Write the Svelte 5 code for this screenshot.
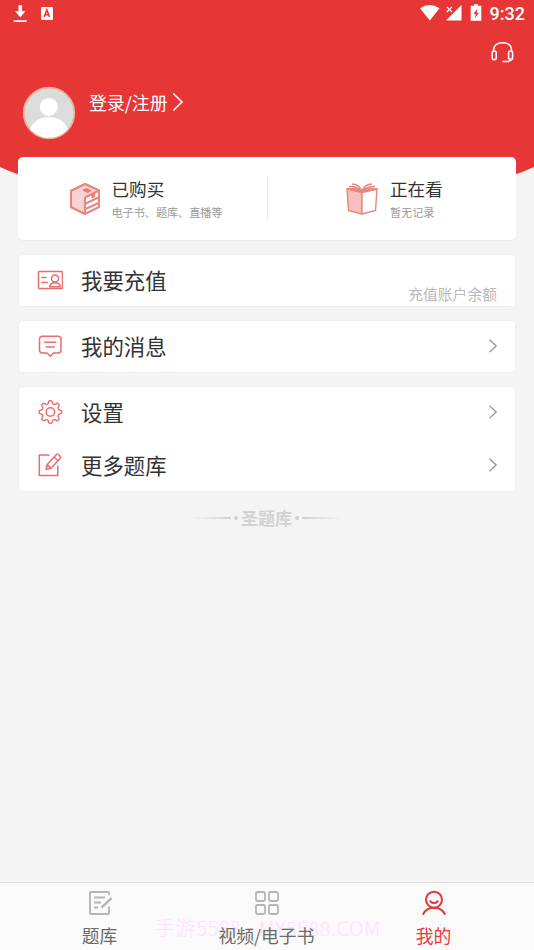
<script>
  const groups = [
    { rows: [{ icon: 'card', label: '我要充值', note: '充值账户余额' }] },
    { rows: [{ icon: 'message', label: '我的消息' }] },
    { rows: [{ icon: 'gear', label: '设置' }, { icon: 'edit', label: '更多题库' }] }
  ];
  const gear = (() => {
    const pts = [];
    const n = 96;
    for (let i = 0; i < n; i++) {
      const a = (i / n) * Math.PI * 2;
      const r = 9.9 + 1.4 * Math.tanh(2.2 * Math.cos(a * 8));
      pts.push(`${(13 + r * Math.sin(a)).toFixed(2)} ${(13 - r * Math.cos(a)).toFixed(2)}`);
    }
    return `M${pts.join('L')}Z`;
  })();
</script>

<div class="screen">
  <header>
    <svg class="backdrop" width="534" height="200" viewBox="0 0 534 200">
      <path d="M0 0H534V167Q515 176 490 182Q267 215 44 182Q19 176 0 167Z" fill="#e63636" />
    </svg>
    <div class="status">
      <svg width="60" height="27" viewBox="0 0 60 27" fill="#fff">
        <path d="M18.5 5h3.6v6.3h3.4L20.3 17.2 15 11.3h3.5zM13.6 20.2h13v1.7h-13z" />
        <rect x="41" y="7" width="12" height="13" rx="1" />
        <path d="M44.2 17 46.8 10 49.6 17M45.2 14.7h3.4" fill="none" stroke="#e63636" stroke-width="1.6" />
      </svg>
      <svg class="signals" width="70" height="27" viewBox="416 0 70 27">
        <path d="M420 8.2Q429.8 1.8 439.5 8.2L429.8 20.5Z" fill="#fff" />
        <path d="M461.5 5V20.5H446Z" fill="#fff" />
        <path d="M445 5H455V9L450 14H445Z" fill="#e63636" />
        <path d="M446.8 6.8l5.2 5.2m0-5.2-5.2 5.2" stroke="#fff" stroke-width="1.1" />
        <path d="M474 4.3h4v1.5h3.3v15h-10.6v-15h3.3z" fill="#fff" />
        <path d="M477.5 8.5l-4 5.5h2.2l-.8 4.3 4-5.6h-2.2z" fill="#e63636" />
      </svg>
      <span class="time">9:32</span>
    </div>
    <svg class="headset" width="24" height="24" viewBox="0 0 24 24" fill="none" stroke="#fff" stroke-width="1.6">
      <path d="M3.5 11.5V10.3C3.5 5.5 7 2.8 12.5 2.8S21.5 5.5 21.5 10.3V11.5M21.3 18.5Q20.5 21.5 17.5 21.5H12.5" />
      <rect x="2.2" y="11" width="4" height="8.6" rx="1.8" />
      <rect x="18.6" y="11" width="4" height="8.6" rx="1.8" />
    </svg>
    <div class="profile">
      <svg width="54" height="54" viewBox="0 0 54 54">
        <defs><clipPath id="face"><circle cx="27" cy="27" r="24.8" /></clipPath></defs>
        <circle cx="27" cy="27" r="25.3" fill="#dcdcdc" stroke="#eeb096" stroke-width="1.8" />
        <g clip-path="url(#face)" fill="#fff">
          <circle cx="26.7" cy="20.9" r="9" />
          <ellipse cx="27" cy="48.5" rx="20" ry="17.5" />
        </g>
      </svg>
      <div class="login">登录/注册
        <svg width="12" height="20" viewBox="0 0 12 20" fill="none" stroke="#fff" stroke-width="1.5"><path d="M1.3 1.5 10 10 1.3 18.5" /></svg>
      </div>
    </div>
  </header>

  <main>
    <section class="card summary">
      <div class="half first">
        <svg width="32" height="34" viewBox="0 0 32 34" fill="none" stroke="#e88680" stroke-width="2" stroke-linejoin="round">
          <path d="M2 9 16 2 30 8.5V25L16 32 2 25Z" fill="#fff" />
          <path d="M2 9 16 2 30 8.5 16 15.5V32L2 25Z" fill="#f9d3d1" />
          <path d="M13 8 17.5 6 23 8.8 18.5 11Z" fill="#e67b76" stroke="none" />
          <path d="M16.5 21.5 29.5 15.5M16.5 27 29.5 21" />
          <path d="M22.5 12.5 26 10.8V15L22.5 16.7Z" fill="#e67b76" stroke="none" />
        </svg>
        <div><h2>已购买</h2><p>电子书、题库、直播等</p></div>
      </div>
      <div class="half second">
        <svg width="32" height="34" viewBox="0 0 32 34" fill="none" stroke="#e88680" stroke-width="1.4" stroke-linejoin="round">
          <path d="M1 7 16 10.5V32L2.5 28.5Z" fill="#f8bfbc" />
          <path d="M31 7 16 10.5V32L29.5 28.5Z" fill="#fff" />
          <path d="M16 10Q12 4 3 4.5M16 9Q13 2 6 2M16 10Q20 4 29 4.5M16 9Q19 2 26 2" />
          <path d="M16 10Q11 5 1 7L16 10Q21 5 31 7Z" fill="#ee9995" />
        </svg>
        <div><h2>正在看</h2><p>暂无记录</p></div>
      </div>
    </section>

    {#each groups as group}
      <section class="card group">
        {#each group.rows as row}
          <div class="row">
            <svg width="26" height="26" viewBox="0 0 26 26" fill="none" stroke="#e66e6b" stroke-width="1.5" stroke-linecap="round" stroke-linejoin="round">
              {#if row.icon === 'card'}
                <rect x="1.5" y="4.5" width="24" height="17" rx="1" />
                <circle cx="18" cy="11.4" r="3.5" />
                <path d="M12.6 19.8C13.1 16.6 15 15.7 18 15.7S22.9 16.6 23.4 19.8ZM5 10.5h4M5 15.5h5.5" />
              {:else if row.icon === 'message'}
                <path d="M5.5 3.3H21Q24 3.3 24 6.3V17Q24 20 21 20H16.5L13.3 23.2 10.1 20H5.5Q2.5 20 2.5 17V6.3Q2.5 3.3 5.5 3.3ZM7.8 9.2h11M9.3 14h8" />
              {:else if row.icon === 'gear'}
                <g transform="translate(.4 0)">
                  <path d={gear} stroke-width="1.4" />
                  <circle cx="13" cy="13" r="4.2" />
                </g>
              {:else}
                <path d="M12 3H2.3V23.5H20.8V14" />
                <path d="M9 17.3 10.2 12.6 19.2 2.8Q20.3 1.6 21.6 2.8L23 4.1Q24.2 5.3 23.1 6.6L14.1 16.2ZM17.2 5 21 8.7M10.2 12.6l3.9 3.6" />
              {/if}
            </svg>
            <span class="label">{row.label}</span>
            {#if row.note}
              <span class="note">{row.note}</span>
            {:else}
              <svg class="arrow" width="10" height="16" viewBox="0 0 10 16" fill="none" stroke="#969696" stroke-width="1.3"><path d="M1.5 1.7 8.2 8 1.5 14.3" /></svg>
            {/if}
          </div>
        {/each}
      </section>
    {/each}

    <div class="brand"><i class="line"></i><i class="dot"></i><span>圣题库</span><i class="dot"></i><i class="line flip"></i></div>
  </main>

  <nav>
    <div class="watermark">手游5588 - MY5588.COM</div>
    <div class="tab">
      <svg width="26" height="26" viewBox="0 0 26 26" fill="none" stroke="#b5b5b5" stroke-width="1.9" stroke-linejoin="round">
        <path d="M22 5V3Q22 2 21 2H4Q3 2 3 3V23Q3 24 4 24H21Q22 24 22 23V16.5M7 7.5h11M7 12.5h7M7 17.5h4" />
        <path d="M14.5 17.7 24.5 8.2" stroke-width="2.4" />
      </svg>
      <span>题库</span>
    </div>
    <div class="tab">
      <svg width="26" height="26" viewBox="0 0 26 26" fill="none" stroke="#b5b5b5" stroke-width="1.8">
        <rect x="2" y="2" width="9" height="9" rx="1.5" /><rect x="15" y="2" width="9" height="9" rx="1.5" />
        <rect x="2" y="15" width="9" height="9" rx="1.5" /><rect x="15" y="15" width="9" height="9" rx="1.5" />
      </svg>
      <span>视频/电子书</span>
    </div>
    <div class="tab active">
      <svg width="26" height="26" viewBox="0 0 26 26" fill="none" stroke="#e0373b" stroke-width="2" stroke-linecap="round">
        <circle cx="13" cy="9.7" r="8" />
        <path d="M9.3 11.2Q13 15 16.7 11.2M2.3 24Q5.2 17.7 13 17.7T23.7 24" />
      </svg>
      <span>我的</span>
    </div>
  </nav>
</div>

<style>
  :global(body) { margin: 0; }
  .screen {
    position: relative; width: 534px; height: 950px; overflow: hidden; box-sizing: border-box;
    display: flex; flex-direction: column; background: #f4f4f4; color: #333;
    font-family: "Noto Sans CJK SC", "Noto Sans", sans-serif;
  }
  header { height: 157px; flex: none; display: flex; flex-direction: column; }
  header > :not(.backdrop), main { position: relative; }
  .backdrop { position: absolute; top: 0; left: 0; }
  svg { display: block; flex: none; }
  .status { display: flex; height: 27px; color: #fff; }
  .signals { margin-left: auto; }
  .time { width: 48px; padding-left: 3.5px; box-sizing: border-box; font: 500 18px/28px Roboto, sans-serif; }
  .headset { margin: 13px 20px 0 auto; }
  .profile { display: flex; margin: 22px 0 0 22px; }
  .login { display: flex; height: 32px; align-items: center; margin-left: 13px; color: #fff; font-size: 17.9px; line-height: 32px; gap: 4px; }
  main { flex: 1; display: flex; flex-direction: column; padding: 0 18px; }
  .card { background: #fff; border-radius: 5px; box-sizing: border-box; margin-bottom: 13px; box-shadow: inset 0 0 0 1px #eeeeee; }
  .summary { height: 83px; display: flex; margin-bottom: 14px; box-shadow: 0 1px #ececec; }
  .half { display: flex; box-sizing: border-box; gap: 10.5px; padding-top: 25px; }
  .first { width: 249px; padding-left: 51px; }
  .second { flex: 1; padding-left: 79px; gap: 12px; position: relative; }
  .second::before { content: ""; position: absolute; left: 0; top: 19px; width: 1px; height: 45px; background: #ececec; }
  h2 { margin: -6px 0 0; font-weight: 400; font-size: 17.6px; line-height: 26px; }
  p { margin: 1px 0 0; font-size: 11.1px; line-height: 18px; color: #999; }
  .row { height: 52px; display: flex; align-items: center; padding: 0 18px 0 19px; }
  .row + .row { height: 53px; }
  .group { padding-bottom: 1px; }
  .label { margin-left: 18px; font-size: 21.4px; line-height: 50px; flex: 1; }
  .note { align-self: flex-end; margin-right: 1px; font-size: 14.8px; line-height: 24px; color: #b9b9b9; }
  .brand { display: flex; align-items: center; justify-content: center; height: 26px; margin-left: -1px; color: #d2d2d2; font-size: 17px; font-weight: 700; line-height: 26px; }
  .line { width: 40px; height: 2px; background: linear-gradient(90deg, #f4f4f4, #d0d0d0); }
  .flip { transform: scaleX(-1); }
  .dot { width: 4px; height: 4px; border-radius: 50%; background: #cfcfcf; margin: 0 3px; }
  nav { position: relative; height: 68px; box-sizing: border-box; border-top: 1px solid #dedede; background: #fafafa; display: flex; flex: none; padding: 0 17px 0 16px; }
  .tab { position: relative; flex: 1; display: flex; flex-direction: column; align-items: center; padding-top: 7px; color: #6b6b6b; font-size: 17.8px; line-height: 28px; }
  .tab span { margin-top: 5px; }
  .tab.active { color: #e63a3c; }
  .watermark { position: absolute; left: 155px; top: 31px; font-size: 20px; font-weight: 300; letter-spacing: 0.6px; line-height: 28px; color: #fae3fa; white-space: nowrap; }
</style>
